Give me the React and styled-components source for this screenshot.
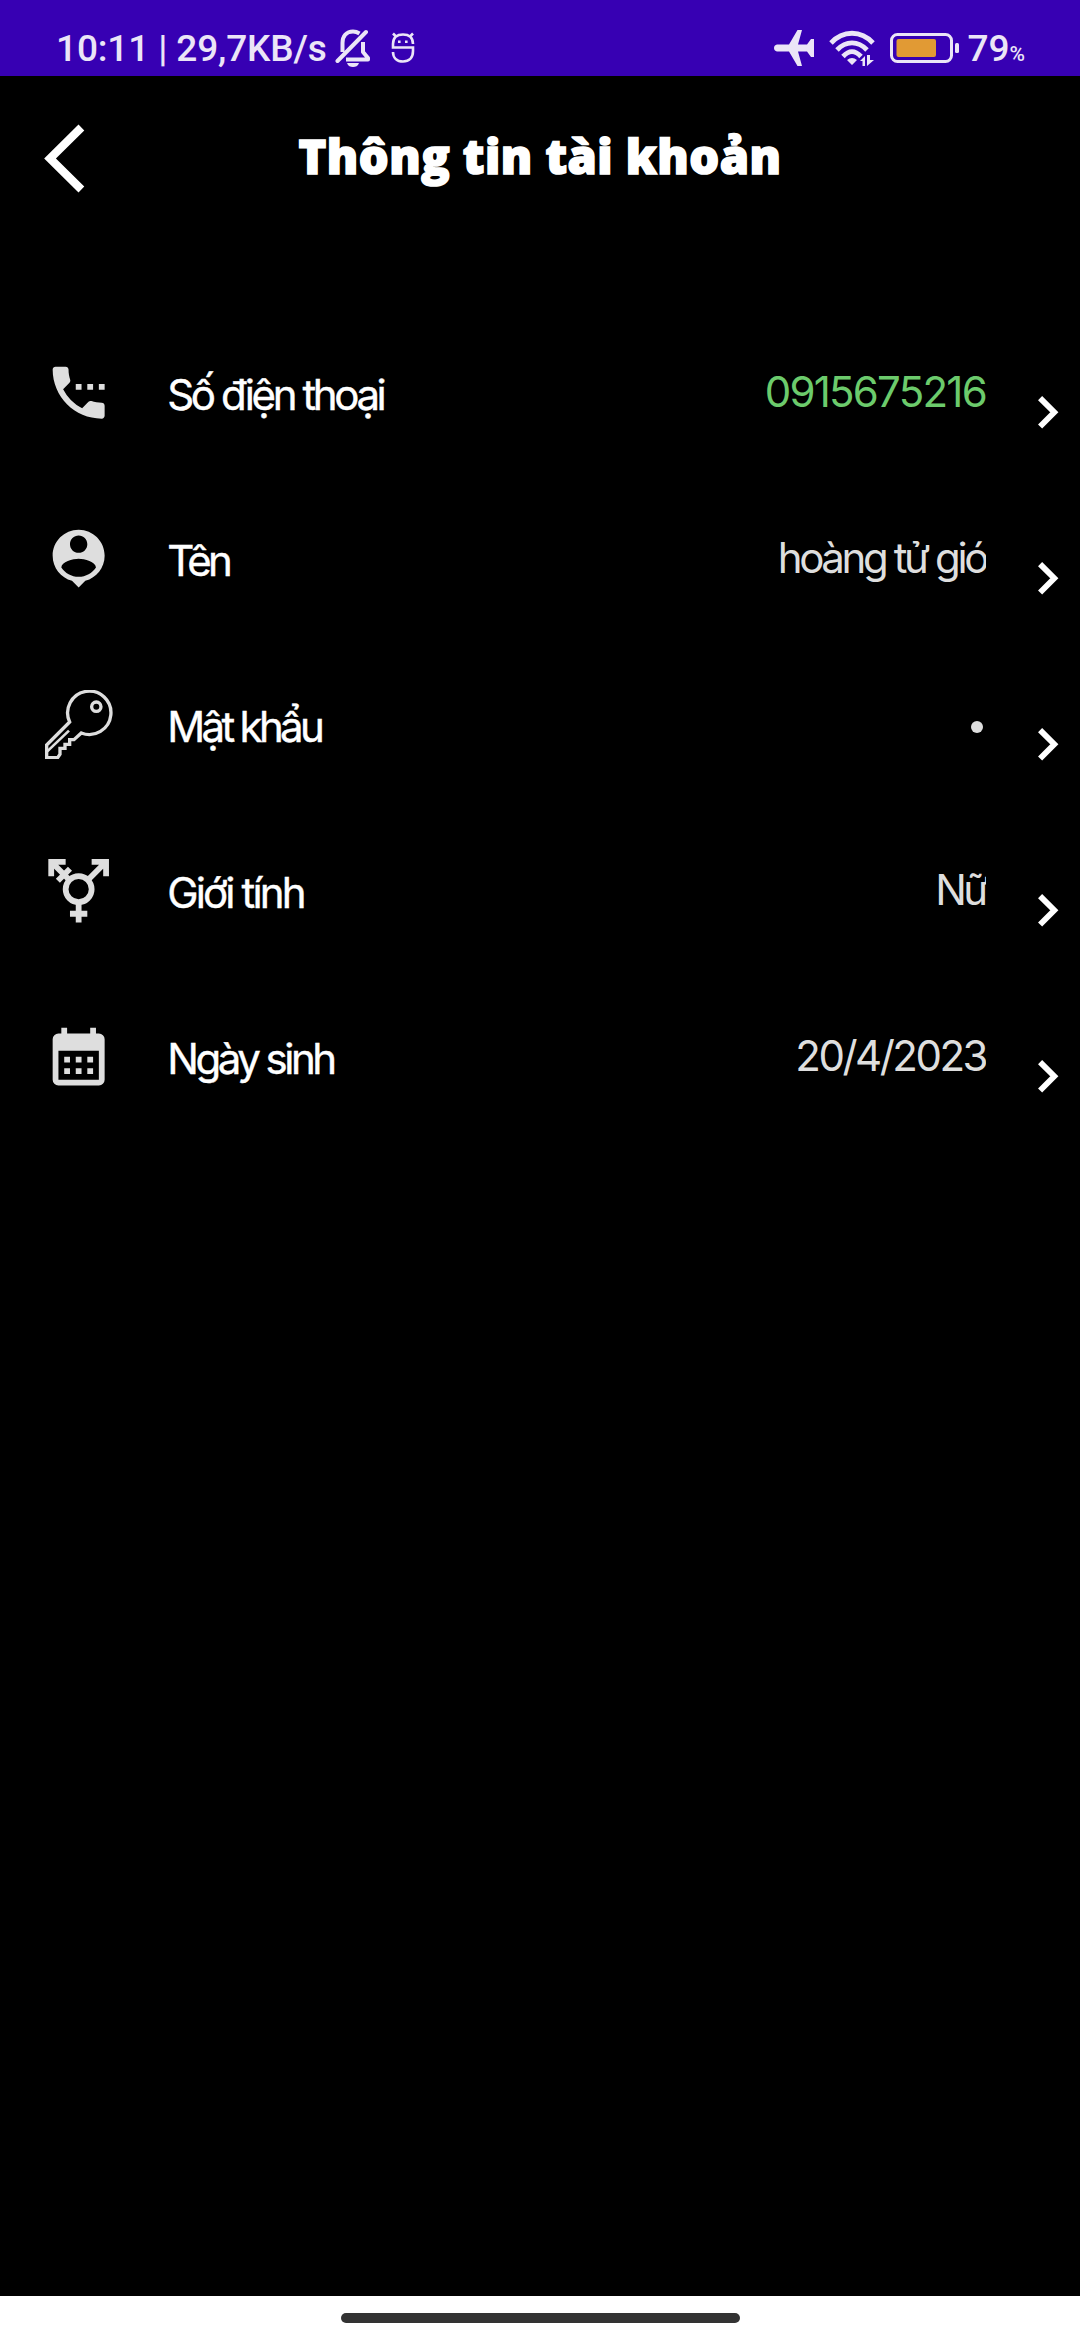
import React from "react";
import styled, { createGlobalStyle } from "styled-components";

const Global = createGlobalStyle`
  body { margin: 0; background: #000; }
  * { box-sizing: border-box; }
  svg { display: block; flex: none; }
`;

const Screen = styled.div`
  width: 1080px;
  height: 2340px;
  display: flex;
  flex-direction: column;
  background: #000;
  color: #fff;
  font-family: Inter, "Noto Sans", sans-serif;
  overflow: hidden;
`;

const StatusBar = styled.div`
  height: 76px;
  padding: 20px 55px 0 56px;
  background: #3700b3;
  color: #ebe5f7;
  font-family: Roboto, "Noto Sans", sans-serif;
  font-weight: 500;
  display: flex;
  align-items: center;
  justify-content: space-between;
`;

const StatusGroup = styled.div`
  display: flex;
  align-items: center;
`;

const Clock = styled.span`
  padding-top: 2px;
  font-size: 37px;
  line-height: 56px;
  letter-spacing: -0.15px;
  white-space: pre;
`;

const BatteryLevel = styled(Clock)`
  margin-left: 7px;
  letter-spacing: 0;
  line-height: 54px;
`;

const Percent = styled.small`
  font-size: 21px;
  line-height: 1;
`;

const StatusIcon = styled.svg`
  margin-left: ${(p) => p.$gap}px;
`;

const Header = styled.header`
  height: 166px;
  padding: 0 44px;
  display: grid;
  grid-template-columns: 60px 1fr 60px;
`;

const BackButton = styled.button`
  margin-top: 48px;
  padding: 0;
  border: 0;
  background: none;
  height: 70px;
  width: 60px;
`;

const Title = styled.h1`
  margin: 45px 0 0;
  font: 800 47px/70px "Open Sans", sans-serif;
  letter-spacing: 0.5px;
  -webkit-text-stroke: 1.6px #fff;
  stroke-linejoin: round;
  text-align: center;
  white-space: nowrap;
`;

const List = styled.main`
  flex: 1;
  padding-top: 71px;
`;

const Row = styled.div`
  height: 166px;
  padding: 45px 21px 0 44px;
  display: flex;
  align-items: flex-start;
`;

const Label = styled.span`
  margin: 10px 0 0 54px;
  flex: 1;
  font-size: 42px;
  line-height: 54px;
  letter-spacing: ${(p) => p.$spacing}px;
  -webkit-text-stroke: 0.4px #fff;
`;

const Value = styled.span`
  margin: 7px 52px 0 0;
  font-size: 42px;
  line-height: 54px;
  letter-spacing: ${(p) => p.$spacing}px;
  color: ${(p) => p.$color || "#dedede"};
  overflow-x: clip;
`;

const Chevron = styled.svg`
  margin-top: 38px;
`;

const Dot = styled.i`
  width: 12px;
  height: 12px;
  margin: 31px 55px 0 0;
  border-radius: 50%;
  background: #dedede;
`;

const NavBar = styled.footer`
  height: 44px;
  padding-top: 17px;
  background: #fff;
  display: flex;
  justify-content: center;
`;

const NavHandle = styled.div`
  width: 399px;
  height: 10px;
  border-radius: 5px;
  background: #333;
`;

const Glyph = ({ children, ...rest }) => (
  <svg width="69.3" height="69.3" viewBox="0 0 24 24" fill="#dedede" {...rest}>
    {children}
  </svg>
);

const PhoneIcon = () => (
  <Glyph>
    <path d="M11 9h2v2h-2zM15 9h2v2h-2zM19 9h2v2h-2zM20 15.5c-1.25 0-2.45-.2-3.57-.57a1.02 1.02 0 0 0-1.02.24l-2.2 2.2a15.05 15.05 0 0 1-6.59-6.59l2.2-2.21c.28-.26.36-.65.25-1C8.7 6.45 8.5 5.25 8.5 4c0-.55-.45-1-1-1H4c-.55 0-1 .45-1 1 0 9.39 7.61 17 17 17 .55 0 1-.45 1-1v-3.500c0-.55-.45-1-1-1z" />
  </Glyph>
);

const PersonIcon = () => (
  <Glyph>
    <path d="M12 2c-4.97 0-9 4.03-9 9 0 4.17 2.84 7.67 6.69 8.69L12 22l2.31-2.31C18.16 18.67 21 15.17 21 11c0-4.97-4.03-9-9-9zm0 2c1.66 0 3 1.34 3 3s-1.34 3-3 3-3-1.34-3-3 1.34-3 3-3zm0 14.3c-2.5 0-4.71-1.28-6-3.22.03-1.99 4-3.08 6-3.08 1.99 0 5.97 1.09 6 3.08-1.29 1.94-3.5 3.22-6 3.22z" />
  </Glyph>
);

const KeyIcon = () => (
  <Glyph viewBox="41 59 208 208" fill="none" stroke="#dedede" strokeWidth="10">
    <path d="M118 155L49 224V262H82L89 252V234H104V222H118V208H131L153 188A65 65 0 1 0 118 155Z" />
    <path d="M50 244L116 181" strokeWidth="8" />
    <circle cx="198" cy="109" r="14" />
  </Glyph>
);

const GenderIcon = () => (
  <Glyph fill="none" stroke="#dedede" strokeWidth="2">
    <circle cx="12" cy="11.5" r="4.5" />
    <path d="M12 16v7M9 20h6M2.500 2l6.300 6.300M4.800 8.600l4.200-4.200M21.500 2l-6.300 6.300M7.500 2h-5v5M16.500 2h5v5" />
  </Glyph>
);

const CalendarIcon = () => (
  <Glyph>
    <path
      fillRule="evenodd"
      d="M19 4h-1V2h-2v2H8V2H6v2H5a2 2 0 0 0-2 2v14a2 2 0 0 0 2 2h14a2 2 0 0 0 2-2V6a2 2 0 0 0-2-2zm0 16H5V10h14zM7 12h2v2H7zM11 12h2v2h-2zM15 12h2v2h-2zM7 16h2v2H7zM11 16h2v2h-2zM15 16h2v2h-2z"
    />
  </Glyph>
);

const rows = [
  { label: "Số điện thoại", tight: -3.4, value: "0915675216", gap: -1.75, color: "#6ccb6c", Icon: PhoneIcon },
  { label: "Tên", tight: -3.8, value: "hoàng tử gió", gap: -3.4, Icon: PersonIcon },
  { label: "Mật khẩu", tight: -3.7, Icon: KeyIcon },
  { label: "Giới tính", tight: -2.85, value: "Nữ", gap: -3.4, Icon: GenderIcon },
  { label: "Ngày sinh", tight: -3.5, value: "20/4/2023", gap: -2.5, Icon: CalendarIcon },
];

export default function App() {
  return (
    <Screen>
      <Global />
      <StatusBar>
        <StatusGroup>
          <Clock>10:11 | 29,7KB/s</Clock>
          <StatusIcon $gap={8} width="36" height="40" viewBox="0 0 36 40" fill="none" stroke="#ebe5f7" strokeWidth="4">
            <path d="M2.500 33L31 4" strokeLinecap="round" />
            <path d="M7.500 24V15C7.500 8 11.500 3.500 18 3.500C20.500 3.500 22.500 4.200 24.500 5.500M28 14V24L33 30V31.500H11" strokeLinejoin="round" />
            <path d="M12 35H24C23 38 20.500 39 18 39S13 38 12 35Z" fill="#ebe5f7" stroke="none" />
          </StatusIcon>
          <StatusIcon $gap={20} width="24" height="32" viewBox="0 0 24 32" fill="none" stroke="#ebe5f7" strokeWidth="2.600">
            <path d="M22 12C22 5 18 2.500 12 2.500S2 5 2 12V15.500H22V19C22 26 18 29.500 12 29.500S2 26 2 20M2 1.500L5 4.500M22 1.500L19 4.500" />
            <path d="M7 8.500h2.600v2.600h-2.600zM14 8.500h2.600v2.600h-2.600z" fill="#ebe5f7" stroke="none" />
          </StatusIcon>
        </StatusGroup>
        <StatusGroup>
          <svg width="41" height="36" viewBox="0 0 41 36" fill="#ebe5f7">
            <path d="M3 14.500H15L23.500 0H28L24 14.500H33L37 9H40V27H37L33 21.500H24L28 36H23.500L15 21.500H3C-1 21 -1 15 3 14.500Z" />
          </svg>
          <StatusIcon $gap={14} width="47" height="36" viewBox="0 0 47 36" fill="none" stroke="#ebe5f7" strokeWidth="4.800">
            <path d="M2 13C14 0 32 0 44 13M8 20C17 10.500 29 10.500 38 20M14 26.500C20 20 26 20 32 26.500" />
            <path d="M18 30Q23 26 28 30L23 35ZM31 31L36 26V36H33.500V31ZM38 25V36L45 30H41V25Z" fill="#ebe5f7" stroke="none" />
          </StatusIcon>
          <StatusIcon $gap={14} width="70" height="30" viewBox="0 0 70 30">
            <rect x="1.500" y="1.500" width="60" height="27" rx="6" fill="none" stroke="#ebe5f7" strokeWidth="3" />
            <rect x="6.500" y="6" width="39.500" height="18" rx="2" fill="#e19a34" />
            <rect x="65" y="10" width="4" height="10" rx="1.500" fill="#ebe5f7" />
          </StatusIcon>
          <BatteryLevel>
            79<Percent>%</Percent>
          </BatteryLevel>
        </StatusGroup>
      </StatusBar>
      <Header>
        <BackButton aria-label="Quay lại">
          <svg width="41" height="70" viewBox="0 0 41 70" fill="none" stroke="#fff" strokeWidth="8.200">
            <path d="M37.400 3.500L6 34.500L37.400 65.500" />
          </svg>
        </BackButton>
        <Title>Thông tin tài khoản</Title>
      </Header>
      <List>
        {rows.map(({ label, tight, value, gap, color, Icon }) => (
          <Row key={label}>
            <Icon />
            <Label $spacing={tight}>{label}</Label>
            {value ? (
              <Value $color={color} $spacing={gap}>
                {value}
              </Value>
            ) : (
              <Dot />
            )}
            <Chevron width="21" height="33" viewBox="0 0 21 33" fill="none" stroke="#fff" strokeWidth="5.800">
              <path d="M2.100 2.100L16.300 16.300L2.100 30.500" />
            </Chevron>
          </Row>
        ))}
      </List>
      <NavBar>
        <NavHandle />
      </NavBar>
    </Screen>
  );
}
